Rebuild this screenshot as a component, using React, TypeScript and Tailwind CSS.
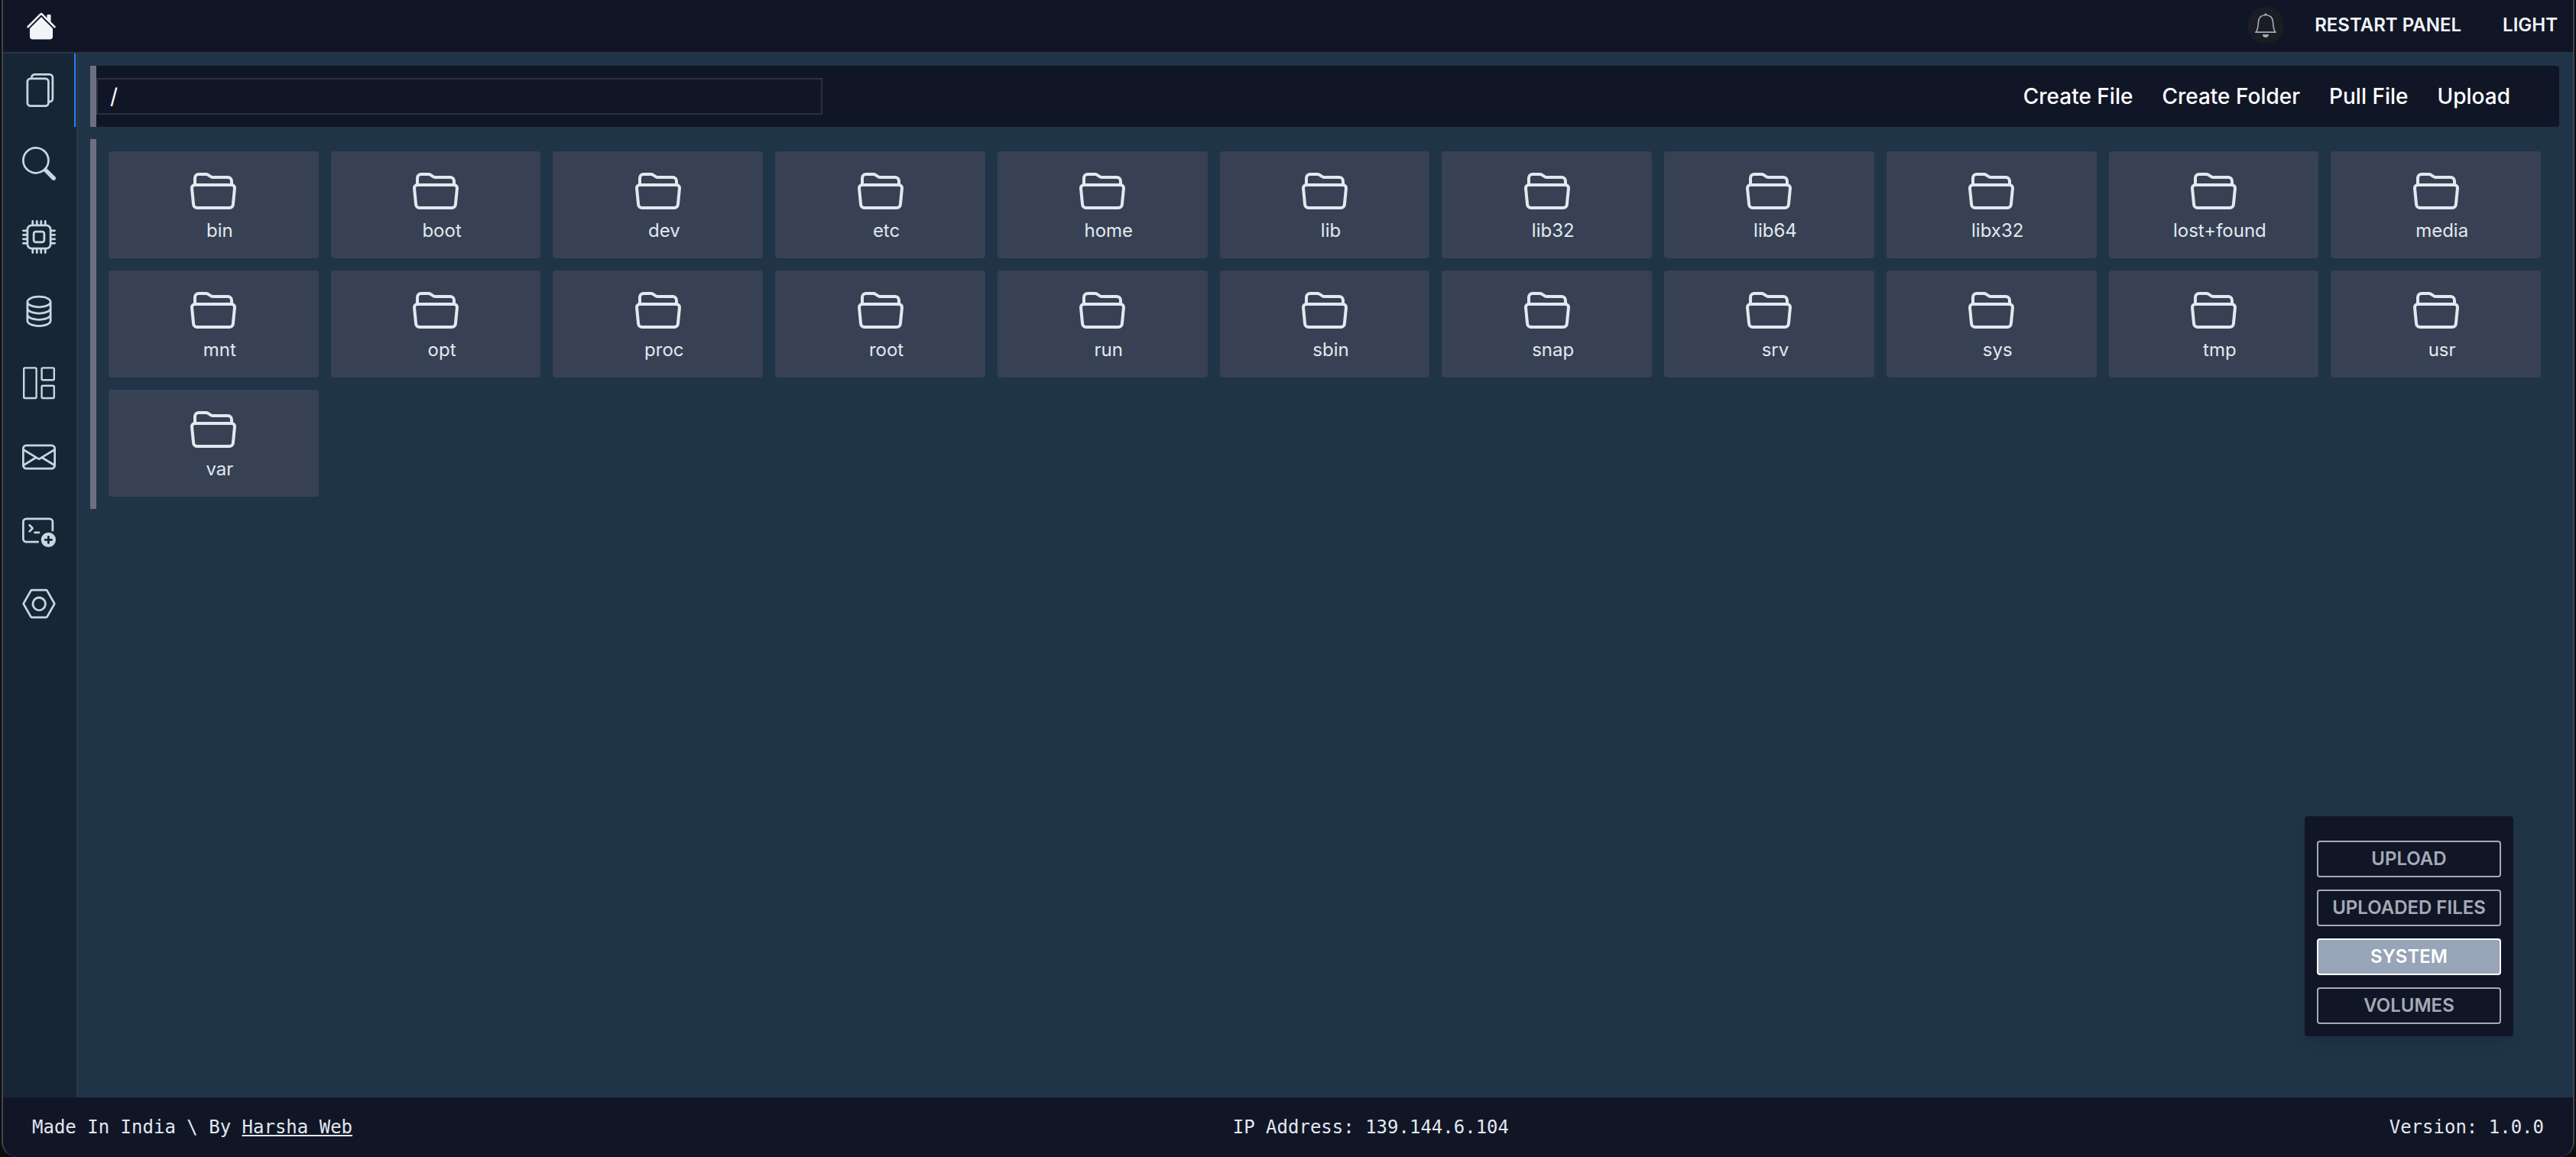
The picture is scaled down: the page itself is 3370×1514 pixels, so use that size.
import React from "react";
import { BsHouseFill, BsFiles, BsSearch, BsCpu, BsEnvelope, BsTerminalPlus, BsNut, BsDatabase } from "react-icons/bs";
import { IoFolderOpenOutline } from "react-icons/io5";

type IconProps = { className?: string };

function LayoutIcon({ className }: IconProps) {
  return (
    <svg viewBox="0 0 44 44" fill="none" stroke="currentColor" strokeWidth="2.4" className={className}>
      <rect x="2.2" y="1.4" width="16.4" height="39.6" rx="1.5" />
      <rect x="25.6" y="1.4" width="16.2" height="15.8" rx="1.5" />
      <rect x="25.6" y="24.8" width="16.2" height="16.2" rx="1.5" />
    </svg>
  );
}

function BellIcon({ className }: IconProps) {
  return (
    <svg viewBox="0 0 32 32" fill="none" stroke="currentColor" strokeWidth="1.6" className={className}>
      <path d="M14 2.6 Q14 0.4 16 0.4 Q18 0.4 18 2.6 Z" fill="currentColor" stroke="none" />
      <path d="M3.4 25.2 C5.4 22 6.2 17 6.4 12.4 C6.6 6.4 10.2 2.8 16 2.8 C21.8 2.8 25.4 6.4 25.6 12.4 C25.8 17 26.6 22 28.6 25.2 Z" />
      <path d="M2.4 25.2 H29.6" />
      <path d="M12 28 H20 A4 4 0 0 1 12 28 Z" fill="currentColor" stroke="none" />
    </svg>
  );
}

const nav = [
  { name: "Files", Icon: BsFiles },
  { name: "Search", Icon: BsSearch },
  { name: "Processes", Icon: BsCpu },
  { name: "Databases", Icon: BsDatabase },
  { name: "Layout", Icon: LayoutIcon },
  { name: "Mail", Icon: BsEnvelope },
  { name: "Terminal", Icon: BsTerminalPlus },
  { name: "Settings", Icon: BsNut },
];

const folders = [
  "bin", "boot", "dev", "etc", "home", "lib", "lib32", "lib64", "libx32", "lost+found", "media",
  "mnt", "opt", "proc", "root", "run", "sbin", "snap", "srv", "sys", "tmp", "usr", "var",
];

const places = ["UPLOAD", "UPLOADED FILES", "SYSTEM", "VOLUMES"];

export default function App() {
  return (
    <div className="min-h-screen bg-[#0c0d0e] px-[2px] font-['Inter',sans-serif]">
      <div className="flex min-h-screen flex-col overflow-hidden rounded-b-[20px] border-x-2 border-[#3f4453] bg-[#111627]">
        <header className="flex h-[70px] items-center justify-between border-b-2 border-[#2b3344] pl-[30px] pr-5 text-slate-100">
          <a href="#home" aria-label="Home"><BsHouseFill className="size-10" /></a>
          <div className="flex items-center pb-[2px] text-2xl font-semibold">
            <button aria-label="Notifications" className="mr-10 flex size-12 items-center justify-center rounded-full bg-[#1a1d24] text-[#a3a8b4]">
              <BellIcon className="size-8" />
            </button>
            <button className="mr-[54px]">RESTART PANEL</button>
            <button>LIGHT</button>
          </div>
        </header>
        <div className="flex grow">
          <nav className="flex w-[98px] shrink-0 flex-col border-r-2 border-[#2b3b4b] bg-[#172635] text-slate-300">
            {nav.map(({ name, Icon }, i) => (
              <a key={name} href="#" aria-label={name} className={i === 0 ? "mr-px flex h-24 items-center justify-center border-r-2 border-blue-500" : "flex h-24 items-center justify-center border-r-2 border-transparent"}>
                <Icon className="size-11" />
              </a>
            ))}
          </nav>
          <main className="relative grow bg-[#203448] pl-4 pr-[18px] pt-4">
            <div className="flex h-20 items-center justify-between rounded-r border-l-8 border-[#6b7080] bg-[#111627] pr-16">
              <input aria-label="Path" defaultValue="/" className="h-12 w-[950px] border-2 border-[#2b3142] px-4 text-[28px] text-white outline-none" />
              <div className="flex gap-[38px] text-[28px] font-medium text-white">
                <button>Create File</button>
                <button>Create Folder</button>
                <button>Pull File</button>
                <button>Upload</button>
              </div>
            </div>
            <div className="mt-4 grid grid-cols-11 gap-4 border-l-8 border-[#6b7080] py-4 pl-4 pr-6">
              {folders.map((f) => (
                <button key={f} className="flex h-[140px] flex-col items-center gap-1 rounded bg-[#374153] pt-5 text-slate-200">
                  <IoFolderOpenOutline className="size-16" />
                  <span className="pl-4 text-2xl">{f}</span>
                </button>
              ))}
            </div>
            <div className="absolute bottom-20 right-[78px] flex w-[273px] flex-col gap-4 rounded bg-[#111627] px-4 pb-4 pt-8 shadow-lg">
              {places.map((p) => (
                <button key={p} className={p === "SYSTEM" ? "h-12 rounded border-2 border-white bg-[#98a4b8] text-2xl font-semibold text-white" : "h-12 rounded border-2 border-[#a5aab6] text-2xl font-semibold text-[#a5aab6]"}>
                  {p}
                </button>
              ))}
            </div>
          </main>
        </div>
        <footer className="flex h-[78px] items-center justify-between px-[38px] font-['DejaVu_Sans_Mono',monospace] text-2xl text-slate-200">
          <p>Made In India \ By <a href="#" className="underline">Harsha Web</a></p>
          <p>IP Address: 139.144.6.104</p>
          <p>Version: 1.0.0</p>
        </footer>
      </div>
    </div>
  );
}
